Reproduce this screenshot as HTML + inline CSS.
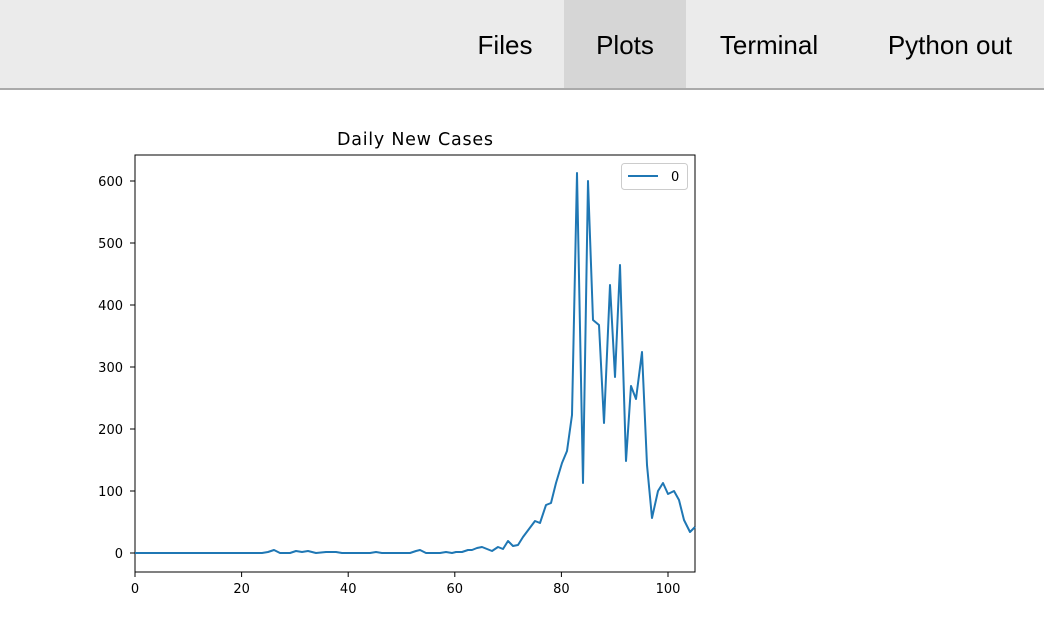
<!DOCTYPE html>
<html><head><style>
body{margin:0;width:1044px;height:622px;background:#fff;font-family:"Liberation Sans",sans-serif;overflow:hidden;position:relative}
.hdr{position:absolute;left:0;top:0;width:1044px;height:88px;background:#ebebeb;border-bottom:2px solid #aaa}
.tab{position:absolute;top:0;height:88px;line-height:90px;font-size:26px;color:#000;text-align:center}
</style></head><body>
<div class="hdr">
<div class="tab" style="left:455px;width:100px">Files</div>
<div class="tab" style="left:564px;width:122px;background:#d6d6d6">Plots</div>
<div class="tab" style="left:700px;width:138px">Terminal</div>
<div class="tab" style="left:862px;width:176px">Python out</div>
</div>
<svg style="position:absolute;left:0;top:0" width="1044" height="622" font-family="DejaVu Sans, sans-serif" font-size="13">
<text x="415" y="145" text-anchor="middle" font-size="17.5" textLength="156">Daily New Cases</text>
<rect x="135" y="155" width="560" height="417" fill="none" stroke="#000" stroke-width="1"/>
<g stroke="#000">
<line x1="135" y1="572" x2="135" y2="577"/><line x1="241.6" y1="572" x2="241.6" y2="577"/><line x1="348.2" y1="572" x2="348.2" y2="577"/><line x1="454.8" y1="572" x2="454.8" y2="577"/><line x1="561.4" y1="572" x2="561.4" y2="577"/><line x1="668" y1="572" x2="668" y2="577"/>
<line x1="130" y1="553" x2="135" y2="553"/><line x1="130" y1="491" x2="135" y2="491"/><line x1="130" y1="429" x2="135" y2="429"/><line x1="130" y1="367" x2="135" y2="367"/><line x1="130" y1="305" x2="135" y2="305"/><line x1="130" y1="243" x2="135" y2="243"/><line x1="130" y1="181" x2="135" y2="181"/>
</g>
<g text-anchor="middle">
<text x="135" y="593">0</text><text x="241.6" y="593">20</text><text x="348.2" y="593">40</text><text x="454.8" y="593">60</text><text x="561.4" y="593">80</text><text x="668" y="593">100</text>
</g>
<g text-anchor="end">
<text x="123" y="558">0</text><text x="123" y="496">100</text><text x="123" y="434">200</text><text x="123" y="372">300</text><text x="123" y="310">400</text><text x="123" y="248">500</text><text x="123" y="186">600</text>
</g>
<polyline fill="none" stroke="#1f77b4" stroke-width="2" stroke-linejoin="round" points="135,553 262,553 268,552 274,550 280,553 290,553 296,551 302,552 308,551 316,553 326,552 336,552 342,553 370,553 376,552 382,553 410,553 416,551 420,550 426,553 440,553 446,552 452,553 456,552 462,552 468,550 472,550 477,548 482,547 487,549 492,551 498,547 503,549 508,541 513,546 518,545 523,537 529,529 535,521 540,523 546,505 551,503 556,483 562,463 567,451 572,415 577,173 583,483 588,181 593,320 599,325 604,423 610,285 615,377 620,265 626,461 631,386 636,399 642,352 647,465 652,518 658,491 663,483 668,494 674,491 679,500 684,520 690,532 695,527"/>
<rect x="621.5" y="163.5" width="66" height="26" rx="3" fill="#fff" stroke="#ccc"/>
<line x1="628" y1="176" x2="658" y2="176" stroke="#1f77b4" stroke-width="2"/>
<text x="671" y="181">0</text>
</svg>
</body></html>
